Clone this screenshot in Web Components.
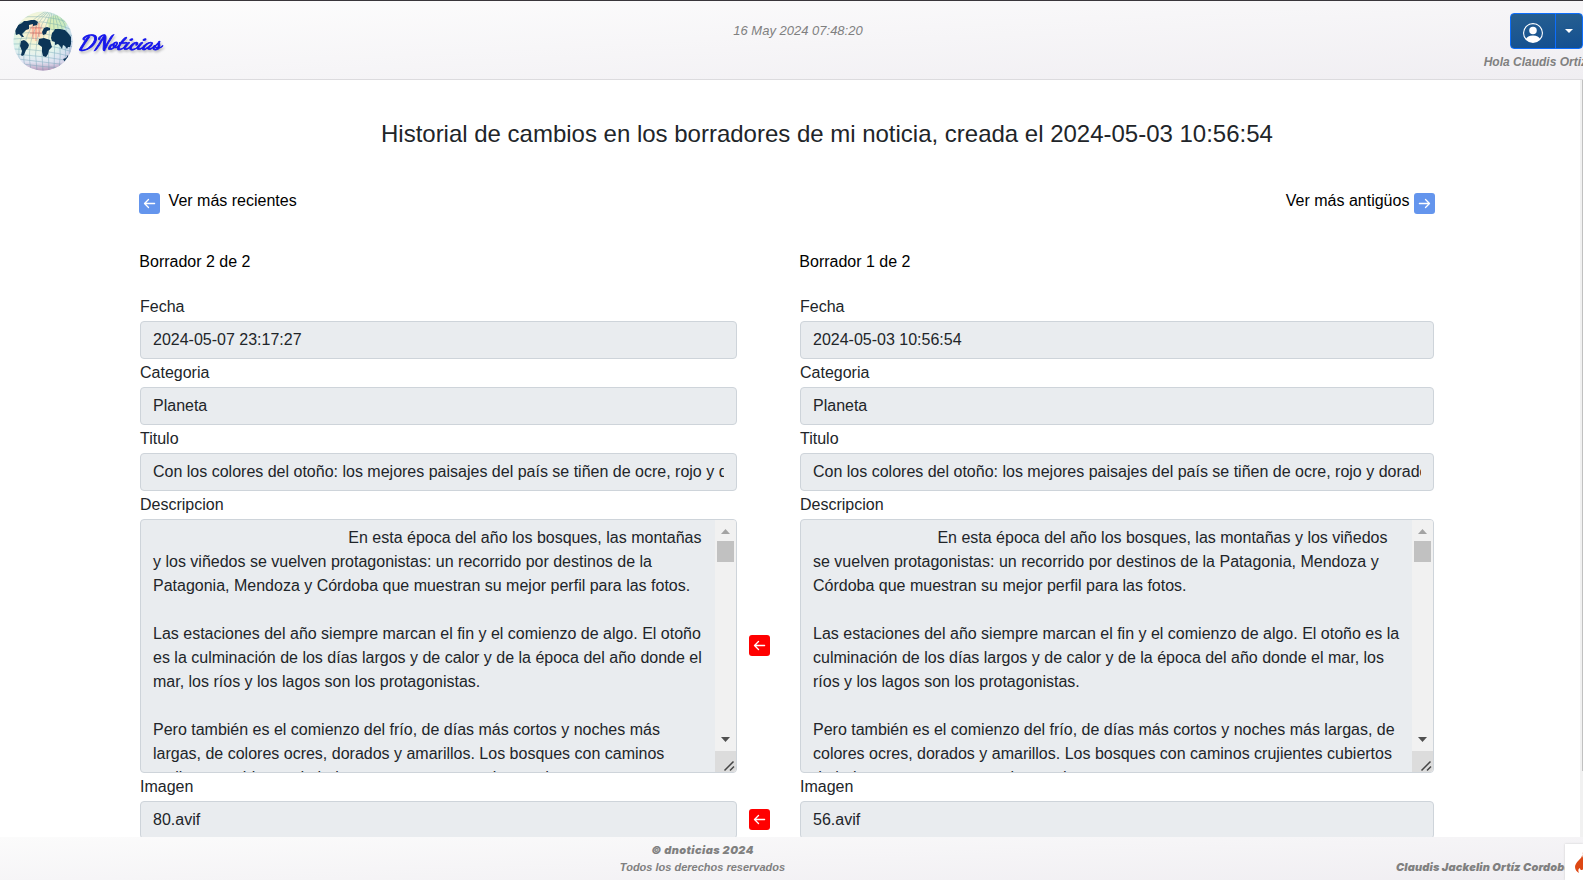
<!DOCTYPE html>
<html lang="es">
<head>
<meta charset="utf-8">
<title>DNoticias</title>
<style>
body{margin:0;font:16px/24px "Liberation Sans",Arial,sans-serif;color:#212529;background:#fff;overflow:hidden}
</style>
</head>
<body>
<dn-page></dn-page>
<script>
const define=(name,html,init)=>customElements.define(name,class extends HTMLElement{
  constructor(){super();const t=document.createElement('template');t.innerHTML=html;
    this.attachShadow({mode:'open'}).append(t.content.cloneNode(true));}
  connectedCallback(){if(init)init(this,this.shadowRoot);}
});

define('dn-arrow',`<style>
:host{display:block;width:21px;height:21px;border-radius:3px;background:var(--tone,#6495ed)}
:host([flip]) svg{transform:scaleX(-1)}
svg{display:block;width:21px;height:21px}
</style><svg viewBox="0 0 21 21" fill="none" stroke="#fff" stroke-width="1.3" stroke-linecap="round" stroke-linejoin="round"><path d="M15.6 10.5H5.6M9.5 6.5l-4 4 4 4"/></svg>`);

define('dn-globe',`<style>:host{display:block;width:60px;height:60px}svg{display:block}</style>
<svg width="60" height="60" viewBox="0 0 60 60">
<defs>
<radialGradient id="b" cx=".4" cy=".32" r=".7"><stop offset="0" stop-color="#fffbe2"/><stop offset=".35" stop-color="#f4f6d8"/><stop offset=".65" stop-color="#d6f1ea"/><stop offset=".88" stop-color="#c3d3e8"/><stop offset="1" stop-color="#a5a3c6"/></radialGradient>
<radialGradient id="r"><stop offset="0" stop-color="#ff9a80" stop-opacity=".5"/><stop offset=".6" stop-color="#ffc79a" stop-opacity=".3"/><stop offset="1" stop-color="#ffe680" stop-opacity="0"/></radialGradient>
<linearGradient id="p" x2="0" y2="1"><stop offset=".55" stop-color="#fff" stop-opacity="0"/><stop offset=".85" stop-color="#e9e6f5" stop-opacity=".7"/><stop offset="1" stop-color="#b888ac" stop-opacity=".7"/></linearGradient>
<clipPath id="c"><circle cx="30" cy="30" r="29.6"/></clipPath>
</defs>
<g clip-path="url(#c)">
<rect width="60" height="60" fill="url(#b)"/>
<circle cx="23" cy="20" r="13" fill="url(#r)"/>
<ellipse cx="44" cy="12" rx="10" ry="8" fill="#b9e486" opacity=".4"/>
<rect width="60" height="60" fill="url(#p)"/>
<g fill="none" stroke="#4d8ea5" stroke-width=".6" opacity=".55">
<path d="M0 8q30-7 60 5M0 13q30-7 60 6M0 18q30-6 60 7M0 23q30-5 60 8M0 28q30-4 60 8M0 33q30-2 60 8M0 38q30 0 60 8M2 43q28 2 56 7M5 48q25 3 50 6M10 53q20 3 40 4"/>
<path d="M35 0Q5 20 12 58M36 0Q11 22 18 60M37 0Q18 25 24 60M38 0Q26 28 30 60M39 0Q34 28 36 60M40 0Q43 30 41 60M41 0Q50 30 46 60M42 0Q57 28 51 58M44 0Q62 26 55 54M33 0Q0 18 7 54"/>
</g>
<path fill="none" stroke="#f05a50" stroke-width=".8" opacity=".65" d="M20 13v15M23 11v19M26 12v14M17 22h12M17 17h12"/>
<g fill="#0c3557">
<path d="M2 19l3-5 4-2 2-2 3 0 4-1 4 0 3 2-1 3-4 1 0-2-4 1 0 4-3 1-4 4 2 3-2 0-3-3-3 1z"/>
<path d="M8 30l3-1 3 2 2 3-1 3-2 2-2 5-2 1-1-1 1-4-2-5z"/>
<path d="M29 21l2-4 3-1 3 1 0 2-3 1-1 3-3 1z"/>
<path d="M39 22l2-2 1-2 5 0 5 1 3 3 3 4 0 7-1 3-2 0-1 2-2-3-2-1-1 4-2-3-2-2-3 1 0-3-3-1-1-3z"/>
<path d="M26 28l5-1 6 2 1 4 1 3-3 3-1 4-2 3-3-1-1-4 0-5-4-3z"/>
<path d="M50 48l3-1 2-3 0 4-3 3z"/>
</g></g></svg>`);

define('dn-header',`<style>
:host{display:grid;grid-template-columns:1fr auto 1fr;height:80px;box-sizing:border-box;border-top:1px solid #39363b;border-bottom:1px solid #dcdbde;background:linear-gradient(177deg,#fdfdfd,#f0eef2);color:#808080;font-style:italic;overflow:hidden}
.brand{display:flex;align-items:center;padding:1px 0 0 13px}
.brand svg{overflow:visible}
time{font-size:13px;line-height:18px;padding-top:21px;margin-left:13px;white-space:nowrap}
.user{display:flex;flex-direction:column;align-items:flex-end}
.btns{display:flex;margin:12px -1px 0 0;width:74px;height:36px}
.a,.c{box-sizing:border-box;height:36px;border:1px solid #0d6efd;background:linear-gradient(170deg,#286090,#124f91);display:flex;align-items:center;justify-content:center}
.a{width:46px;border-radius:4px 0 0 4px;padding-top:3px}.c{width:28px;margin-left:-1px;border-radius:0 4px 4px 0}
.hi{font-size:12px;line-height:18px;font-weight:bold;white-space:nowrap;margin:4px -4px 0 0}
</style>
<div class="brand"><dn-globe></dn-globe><svg width="90" height="40"><text x="5" y="27.500" textLength="83" lengthAdjust="spacingAndGlyphs" font-family="Dancing Script,Brush Script MT,cursive" font-style="italic" font-weight="700" font-size="20" fill="#1616ec" stroke="#1616ec" stroke-width=".8" style="filter:drop-shadow(1px 2px 1px #bbb)">DNoticias</text></svg></div>
<time>16 May 2024 07:48:20</time>
<div class="user"><div class="btns"><div class="a"><svg width="20" height="20" viewBox="0 0 16 16" fill="#fff"><path d="M11 6a3 3 0 1 1-6 0 3 3 0 0 1 6 0"/><path fill-rule="evenodd" d="M0 8a8 8 0 1 1 16 0A8 8 0 0 1 0 8m8-7a7 7 0 0 0-5.468 11.37C3.242 11.226 4.805 10 8 10s4.757 1.225 5.468 2.37A7 7 0 0 0 8 1"/></svg></div><div class="c"><svg width="8" height="4"><path d="M0 0h8L4 4z" fill="#fff"/></svg></div></div><div class="hi">Hola Claudis Ortiz</div></div>`);

define('dn-field',`<style>
:host{display:block;height:66px}
label{display:block;height:28px;line-height:22px;padding-top:3px;box-sizing:border-box}
.box{height:38px;box-sizing:border-box;border:1px solid #ced4da;border-radius:4px;background:#e9ecef;padding:6px 12px}
.t{overflow:hidden;white-space:nowrap;height:24px}
</style><label></label><div class="box"><div class="t"><slot></slot></div></div>`,(h,r)=>r.querySelector('label').textContent=h.getAttribute('label'));

define('dn-textarea',`<style>
:host{display:block;height:282px}
label{display:block;height:28px;line-height:22px;padding-top:3px;box-sizing:border-box}
.box{height:254px;box-sizing:border-box;border:1px solid #ced4da;border-radius:4px;background:#e9ecef;display:flex;overflow:hidden}
.t{flex:1;min-width:0;padding:6px 0 0 12px;white-space:pre;overflow:hidden}
.bar{width:21px;background:#f1f1f1;display:flex;flex-direction:column;align-items:center}
.th{width:17px;height:21px;background:#c1c1c1;margin-top:7px}
.up{margin-top:9px;display:block}.dn{margin-top:auto;margin-bottom:9px;display:block}
.g{width:21px;height:21px;background:#dcdcdc;display:block}
</style><label></label><div class="box"><div class="t"><slot></slot></div><div class="bar">
<svg class="up" width="9" height="5"><path d="M0 5L4.500 0 9 5z" fill="#a3a3a3"/></svg><div class="th"></div>
<svg class="dn" width="9" height="5"><path d="M0 0h9L4.500 5z" fill="#505050"/></svg>
<svg class="g" viewBox="0 0 21 21"><path d="M9.500 19.500l9-9M15 19.500l4-4" stroke="#454545" stroke-width="1.500"/></svg></div></div>`,(h,r)=>r.querySelector('label').textContent=h.getAttribute('label'));

define('dn-footer',`<style>
:host{display:grid;grid-template-columns:1fr auto 1fr;height:43px;background:linear-gradient(178deg,#fbfbfb,#f0eef2);color:#808080;font-style:italic;overflow:hidden}
.mid{text-align:center;margin-right:178px;grid-column:2;white-space:nowrap}
.mid b{display:block;font:italic 900 11px/17px Inter,"Liberation Sans",sans-serif;margin-top:5px;letter-spacing:.4px}
.mid span{display:block;font-size:11px;line-height:17px;font-weight:bold}
.right{display:flex;justify-content:flex-end}
.n{width:169px;overflow:hidden;white-space:nowrap;font:italic 900 11px/17px Inter,"Liberation Sans",sans-serif;margin-top:22px;letter-spacing:.14px}
.f{width:18px;height:36px;margin-top:7px;background:#fff;box-shadow:0 0 2px #ccc;overflow:hidden}
.f svg{display:block;margin:8px 0 0 9px}
</style><div class="mid"><b>© dnoticias 2024</b><span>Todos los derechos reservados</span></div>
<div class="right"><div class="n">Claudis Jackelin Ortíz Cordoba</div><div class="f"><svg width="18" height="22" viewBox="0 0 18 22"><path fill="#dd4814" d="M8 0c1 4-1 6-3 8C2 11 1 13 1 15c0 3 2 5 4 6-1-2-1-4 1-5 0 2 1 2 2 2s2-2 1-4c4 2 4 5 2 7 4-1 6-4 5-8-1-3-3-4-3-6-1 1-1 2 0 3-4-2-5-6-5-10z"/></svg></div></div>`);

define('dn-page',`<style>
:host{display:flex;flex-direction:column;width:1583px;height:880px;overflow:hidden}
.body{height:757px;display:flex;overflow:hidden}
main{width:1580px;box-sizing:border-box;padding:36px 0 0 139px;overflow:hidden}
h1{font-size:24px;line-height:36px;font-weight:400;margin:0 0 0 242px;white-space:nowrap;letter-spacing:-.008px}
.nav{display:flex;justify-content:space-between;width:1296.400px;height:24px;margin-top:37px;color:#000}
.nav div{display:flex;gap:8.600px}.nav div:last-child{gap:5px}.nav dn-arrow{margin-top:4px}.nav span{line-height:23px}
.cols{display:grid;grid-template-columns:598px 63px 634px;margin-top:37px}
h2{font-size:16px;line-height:24px;font-weight:400;margin:0 0 19px;color:#000}
.l{padding-left:1px}.l h2,.r h2{margin-left:-.700px}
.m{padding:385px 0 0 12.400px;--tone:#f00}
.m dn-arrow+dn-arrow{margin-top:153px}
.sb{width:3px;background:#f1f1f1;display:flex;justify-content:flex-end}
.sb i{width:1px;height:691px;background:#c1c1c1}
</style>
<dn-header></dn-header>
<div class="body"><main>
<h1>Historial de cambios en los borradores de mi noticia, creada el 2024-05-03 10:56:54</h1>
<div class="nav"><div><dn-arrow></dn-arrow><span>Ver más recientes</span></div><div><span>Ver más antigüos</span><dn-arrow flip></dn-arrow></div></div>
<div class="cols">
<div class="l"><h2>Borrador 2 de 2</h2>
<dn-field label="Fecha">2024-05-07 23:17:27</dn-field><dn-field label="Categoria">Planeta</dn-field>
<dn-field label="Titulo">Con los colores del otoño: los mejores paisajes del país se tiñen de ocre, rojo y dorado</dn-field>
<dn-textarea label="Descripcion"><span style="margin-left:195.300px">En esta época del año los bosques, las montañas</span>
y los viñedos se vuelven protagonistas: un recorrido por destinos de la
Patagonia, Mendoza y Córdoba que muestran su mejor perfil para las fotos.

Las estaciones del año siempre marcan el fin y el comienzo de algo. El otoño
es la culminación de los días largos y de calor y de la época del año donde el
mar, los ríos y los lagos son los protagonistas.

Pero también es el comienzo del frío, de días más cortos y noches más
largas, de colores ocres, dorados y amarillos. Los bosques con caminos
crujientes cubiertos de hojas que nos aseguran la paz de</dn-textarea>
<dn-field label="Imagen">80.avif</dn-field></div>
<div class="m"><dn-arrow></dn-arrow><dn-arrow></dn-arrow></div>
<div class="r"><h2>Borrador 1 de 2</h2>
<dn-field label="Fecha">2024-05-03 10:56:54</dn-field><dn-field label="Categoria">Planeta</dn-field>
<dn-field label="Titulo">Con los colores del otoño: los mejores paisajes del país se tiñen de ocre, rojo y dorado</dn-field>
<dn-textarea label="Descripcion"><span style="margin-left:124.400px">En esta época del año los bosques, las montañas y los viñedos</span>
se vuelven protagonistas: un recorrido por destinos de la Patagonia, Mendoza y
Córdoba que muestran su mejor perfil para las fotos.

Las estaciones del año siempre marcan el fin y el comienzo de algo. El otoño es la
culminación de los días largos y de calor y de la época del año donde el mar, los
ríos y los lagos son los protagonistas.

Pero también es el comienzo del frío, de días más cortos y noches más largas, de
colores ocres, dorados y amarillos. Los bosques con caminos crujientes cubiertos
de hojas que nos aseguran la paz de</dn-textarea>
<dn-field label="Imagen">56.avif</dn-field></div>
</div></main><div class="sb"><i></i></div></div>
<dn-footer></dn-footer>`);
</script>
</body>
</html>
